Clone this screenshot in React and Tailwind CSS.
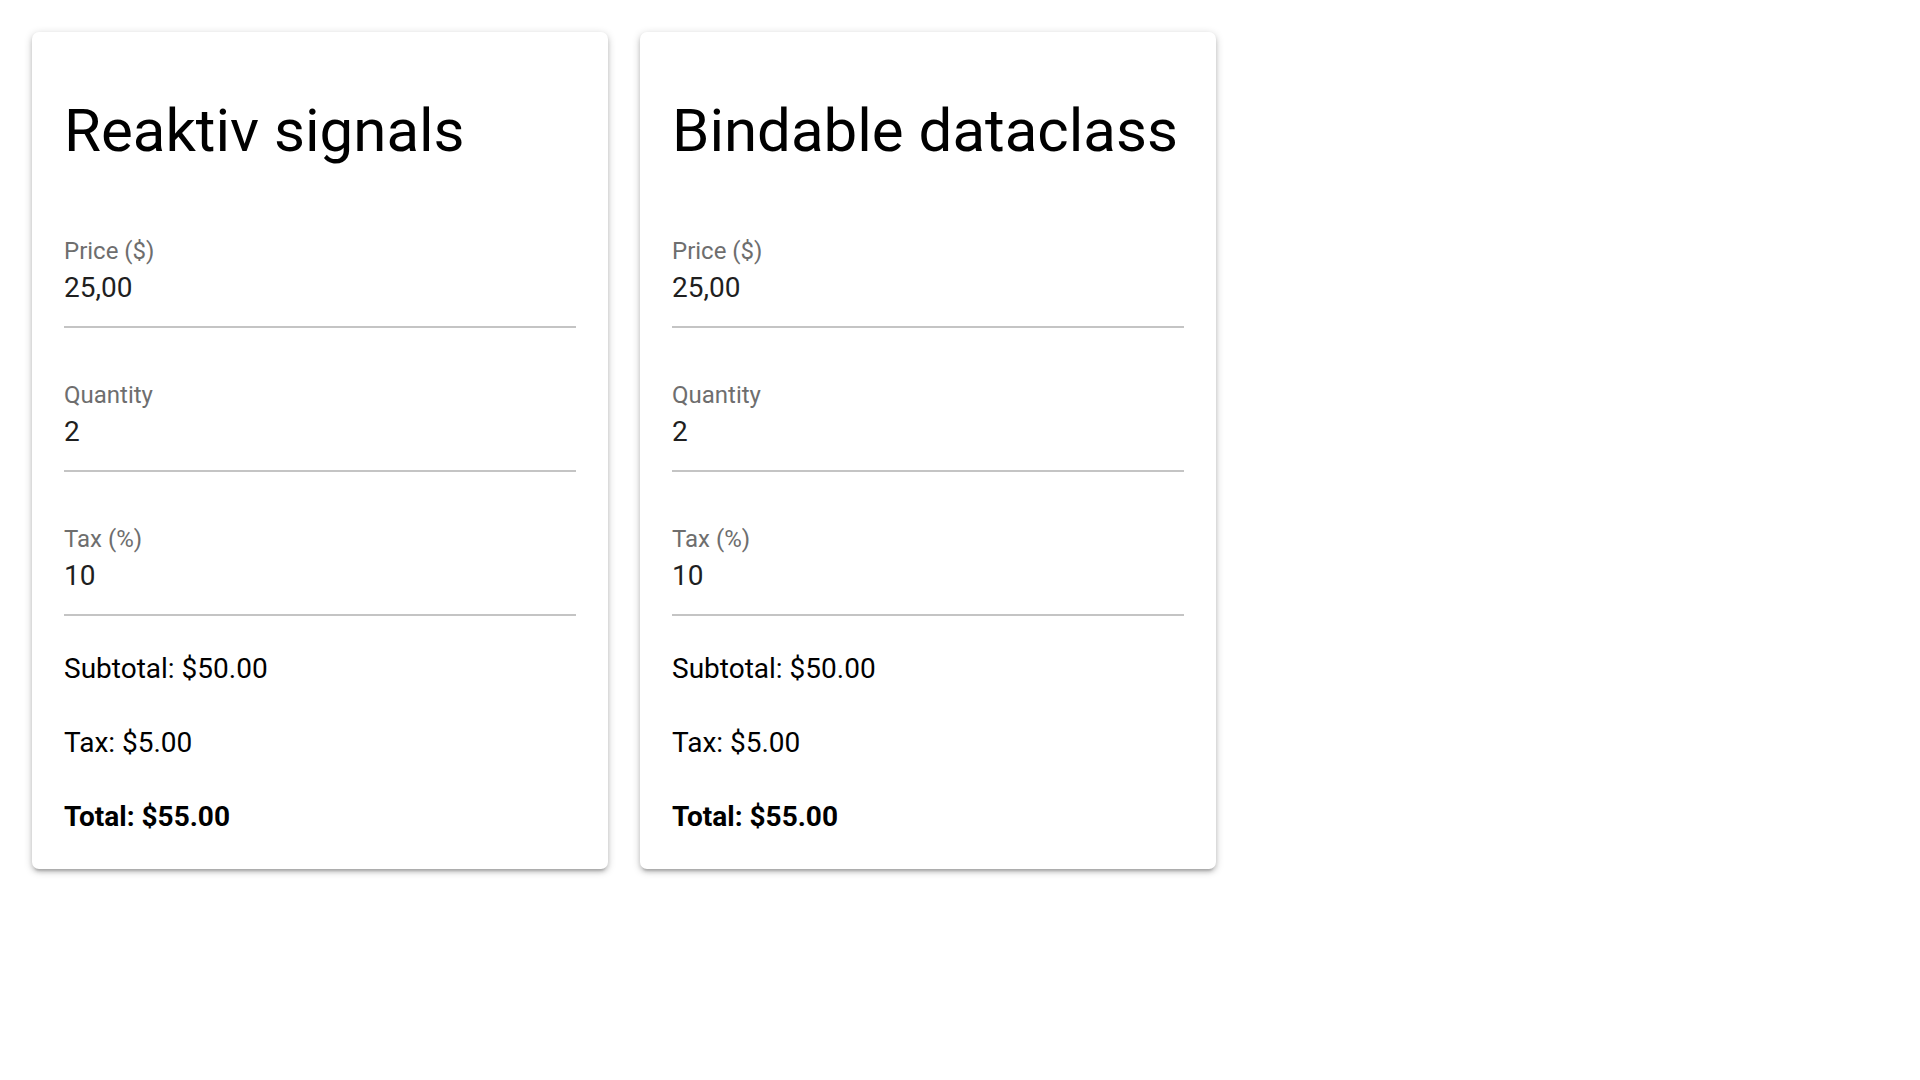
const fields = [
  { label: 'Price ($)', value: '25,00' },
  { label: 'Quantity', value: '2' },
  { label: 'Tax (%)', value: '10' },
]

function Field({ label, value }) {
  return (
    <div className="flex flex-col mt-[53px]">
      <span className="text-[24px] leading-[28px] text-[#6e6e6e]">{label}</span>
      <span className="mt-[7px] text-[28px] leading-[32px] text-[#1f1f1f]">{value}</span>
      <div className="mt-[22px] h-[2px] bg-[#c4c4c4]" />
    </div>
  )
}

function CalcCard({ title }) {
  return (
    <div className="w-[576px] shrink-0 flex flex-col bg-white rounded-[7px] px-8 pb-[31px] pt-8 shadow-[0_2px_9px_rgba(0,0,0,0.2),0_3px_4px_rgba(0,0,0,0.14),0_5px_2px_-3px_rgba(0,0,0,0.12)]">
      <h1 className="mt-8 mb-[18px] text-[60px] leading-[70px] font-normal text-black">{title}</h1>
      {fields.map((f) => (
        <Field key={f.label} label={f.label} value={f.value} />
      ))}
      <div className="mt-[32px] flex flex-col gap-8 text-[28px] leading-[42px] text-black">
        <p>Subtotal: $50.00</p>
        <p>Tax: $5.00</p>
        <p className="font-bold">Total: $55.00</p>
      </div>
    </div>
  )
}

export default function App() {
  return (
    <div
      className="min-h-screen bg-white p-8 flex items-start gap-[32px]"
      style={{ fontFamily: 'Roboto, "Liberation Sans", sans-serif' }}
    >
      <CalcCard title="Reaktiv signals" />
      <CalcCard title="Bindable dataclass" />
    </div>
  )
}
